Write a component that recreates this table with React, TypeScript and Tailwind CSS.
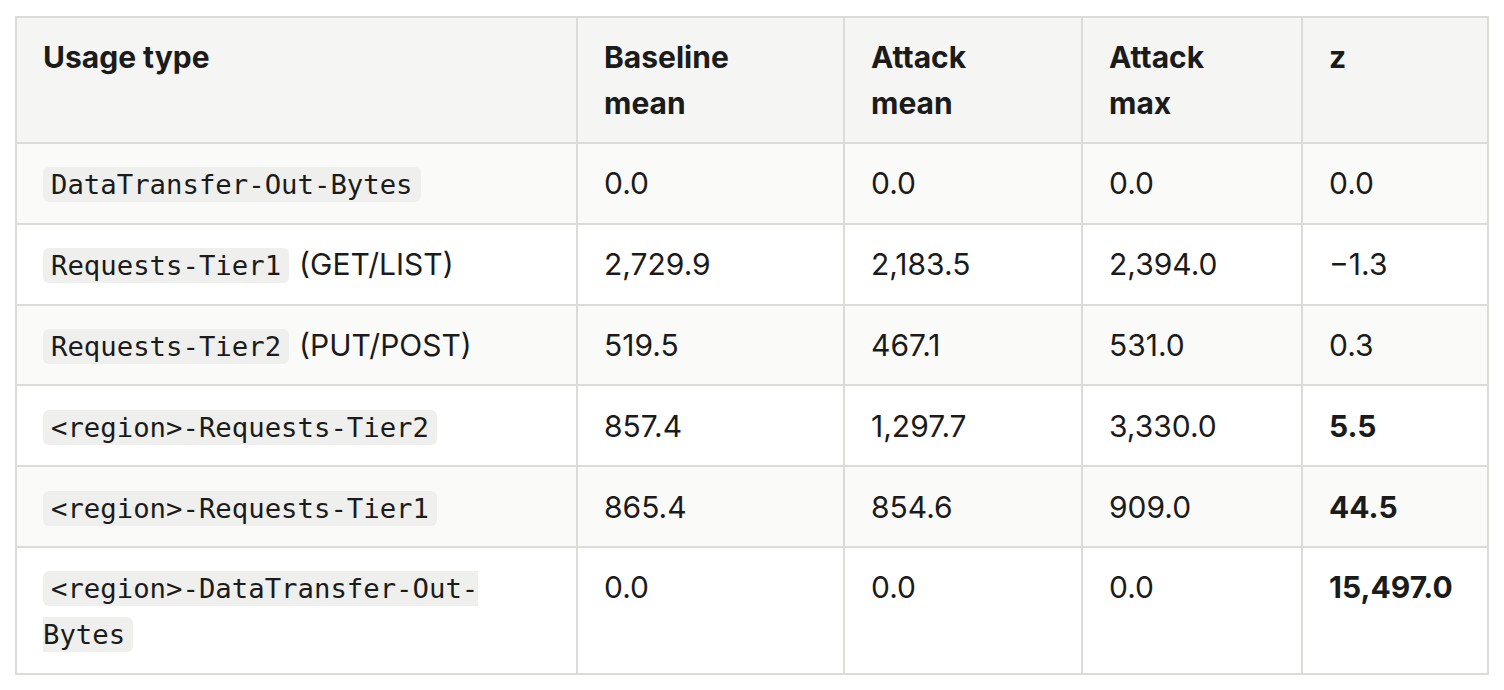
import { ReactNode } from "react"

type Row = {
  code: string
  note?: string
  base: string
  mean: string
  max: string
  z: string
  strong?: boolean
}

const rows: Row[] = [
  { code: "DataTransfer-Out-Bytes", base: "0.0", mean: "0.0", max: "0.0", z: "0.0" },
  { code: "Requests-Tier1", note: "(GET/LIST)", base: "2,729.9", mean: "2,183.5", max: "2,394.0", z: "\u22121.3" },
  { code: "Requests-Tier2", note: "(PUT/POST)", base: "519.5", mean: "467.1", max: "531.0", z: "0.3" },
  { code: "<region>-Requests-Tier2", base: "857.4", mean: "1,297.7", max: "3,330.0", z: "5.5", strong: true },
  { code: "<region>-Requests-Tier1", base: "865.4", mean: "854.6", max: "909.0", z: "44.5", strong: true },
  { code: "<region>-DataTransfer-Out-Bytes", base: "0.0", mean: "0.0", max: "0.0", z: "15,497.0", strong: true },
]

function Code({ children }: { children: ReactNode }) {
  return (
    <code className="rounded-[6px] bg-[#efefed] px-[8px] py-[2px] font-['DejaVu_Sans_Mono',monospace] text-[27.3px] leading-none">
      {children}
    </code>
  )
}

const th = "border-2 border-[#dcdbd8] px-[26px] py-[16px] text-left align-top font-bold"
const td = "border-2 border-[#dcdbd8] px-[26px] py-[16.4px] align-top"

export default function App() {
  return (
    <div className="min-h-screen bg-white pl-[15px] pt-[16px] font-['Inter',sans-serif] text-[30px] leading-[46px] text-[#1b1b1b]">
      <table className="w-[1474px] table-fixed border-collapse">
        <colgroup>
          <col className="w-[561px]" />
          <col className="w-[267px]" />
          <col className="w-[238px]" />
          <col className="w-[220px]" />
          <col className="w-[186px]" />
        </colgroup>
        <thead>
          <tr className="bg-[#f5f5f3]">
            <th className={th}>Usage type</th>
            <th className={th}>Baseline<br />mean</th>
            <th className={th}>Attack<br />mean</th>
            <th className={th}>Attack<br />max</th>
            <th className={th}>z</th>
          </tr>
        </thead>
        <tbody>
          {rows.map((r, i) => (
            <tr key={r.code} className={i % 2 === 0 ? "bg-[#fafaf8]" : "bg-white"}>
              <td className={td}>
                <Code>{r.code}</Code>
                {r.note && <span className="ml-[10px]">{r.note}</span>}
              </td>
              <td className={td}>{r.base}</td>
              <td className={td}>{r.mean}</td>
              <td className={td}>{r.max}</td>
              <td className={td + (r.strong ? " font-bold" : "")}>{r.z}</td>
            </tr>
          ))}
        </tbody>
      </table>
    </div>
  )
}
